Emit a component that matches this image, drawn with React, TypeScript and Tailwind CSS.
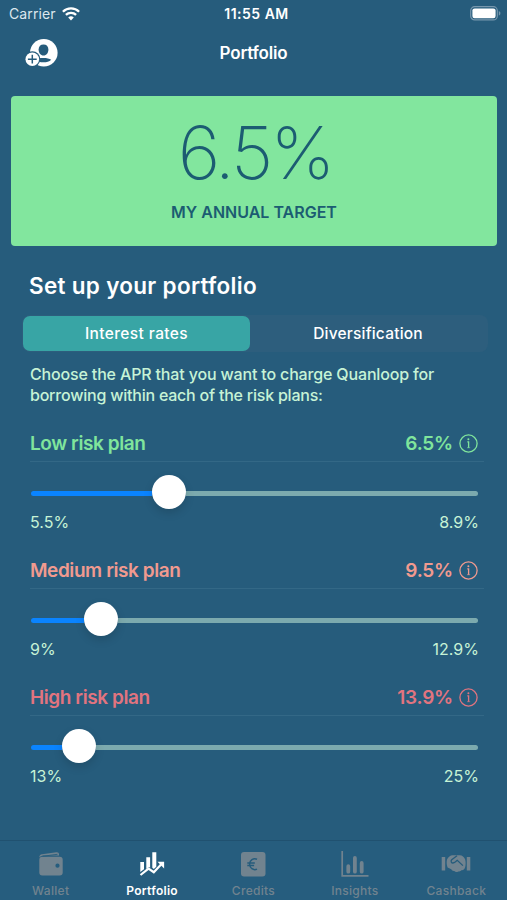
import { ReactNode } from "react";

const plans = [
  {
    name: "Low risk plan",
    rate: "6.5%",
    min: "5.5%",
    max: "8.9%",
    position: 137,
    color: "text-[#80e59c]",
  },
  {
    name: "Medium risk plan",
    rate: "9.5%",
    min: "9%",
    max: "12.9%",
    position: 69,
    color: "text-[#f19a8f]",
  },
  {
    name: "High risk plan",
    rate: "13.9%",
    min: "13%",
    max: "25%",
    position: 47,
    color: "text-[#e2747f]",
  },
];

function WifiIcon() {
  return (
    <svg width="18" height="14" viewBox="0 0 18 14" fill="none" stroke="white" strokeWidth="2.3">
      <path d="M0.9 4.7a11.5 11.5 0 0 1 16.2 0" />
      <path d="M3.9 7.9a7.2 7.2 0 0 1 10.2 0" />
      <path d="M9 13.4 6.2 10.5a4 4 0 0 1 5.6 0Z" fill="white" stroke="none" />
    </svg>
  );
}

function BatteryIcon() {
  return (
    <svg width="31" height="15" viewBox="0 0 31 15">
      <rect x="0.7" y="0.7" width="26.6" height="13.2" rx="4" fill="none" stroke="#7797ad" strokeWidth="1.2" />
      <rect x="2.4" y="2.4" width="23.200" height="9.8" rx="2.2" fill="white" />
      <path d="M28.8 5v4.6c1-.4 1.6-1.3 1.6-2.3S29.8 5.4 28.8 5Z" fill="#7797ad" />
    </svg>
  );
}

function AddUserIcon() {
  return (
    <svg width="34" height="30" viewBox="0 0 34 30">
      <circle cx="18.8" cy="14.8" r="13.8" fill="white" />
      <path d="M18.5 6.6c3 0 4.900 2 4.900 4.900 0 3.400-2 6-4.900 6s-4.900-2.600-4.900-6c0-2.900 1.900-4.900 4.900-4.900Z" fill="#265c7c" />
      <path d="M10.500 21.500c2-1.400 4.600-1.600 8-1.600s5.800.5 7.700 1.800c-1.800 1.800-4.600 2.600-7.700 2.600s-6.300-.6-8-2.800Z" fill="#265c7c" />
      <circle cx="7.3" cy="21.2" r="8" fill="#265c7c" />
      <circle cx="7.3" cy="21.2" r="6.8" fill="white" />
      <path d="M7.300 16.800v8.800M2.900 21.200h8.800" stroke="#265c7c" strokeWidth="1.5" />
    </svg>
  );
}

function InfoIcon() {
  return (
    <svg width="19" height="19" viewBox="0 0 19 19" fill="none" stroke="currentColor" strokeWidth="1.3">
      <circle cx="9.5" cy="9.5" r="8.6" />
      <path d="M8.300 7.800h1.300v6" strokeWidth="1.300" />
      <path d="M8 13.700h3.200" strokeWidth="0.600" />
      <circle cx="9.4" cy="5.3" r="1" fill="currentColor" stroke="none" />
    </svg>
  );
}

function WalletIcon() {
  return (
    <svg width="28" height="28" viewBox="0 0 28 28" fill="currentColor">
      <path d="M2.300 7.500C2.300 5.500 3.300 4.500 5 4.200L19.300 2.200c1.800-.2 2.700.7 2.700 2v1.400H7.500c-2 0-3.800.5-5.200 1.900Z" />
      <path
        fillRule="evenodd"
        d="M5.300 6.800h17.400a3 3 0 0 1 3 3v12.600a3 3 0 0 1-3 3H5.300a3 3 0 0 1-3-3V9.800a3 3 0 0 1 3-3ZM20.500 13.600a2.100 2.100 0 1 0 0 4.200 2.100 2.100 0 0 0 0-4.200Z"
      />
      <path d="M5.500 6.300 20.500 4.300" stroke="#265c7c" strokeWidth="0.9" />
    </svg>
  );
}

function PortfolioIcon() {
  return (
    <svg width="28" height="28" viewBox="0 0 28 28" fill="currentColor">
      <path d="M2.300 12h3.700v7.200l-3.700 2.900ZM8.300 7.300h3.800v10.800l-1-1-2.800 2ZM14.300 2.300h4v14.400l-2.500 2.300-1.500-1.200Z" />
      <path d="m2.500 25 8-6.400 5.300 3.600 8.400-9" fill="none" stroke="currentColor" strokeWidth="2.2" />
      <path d="M19.500 11.800h6.600v6.600Z" />
    </svg>
  );
}

function CreditsIcon() {
  return (
    <svg width="28" height="28" viewBox="0 0 28 28">
      <rect x="2" y="2" width="24.5" height="24.5" rx="3" fill="currentColor" />
      <path
        d="M18 9.300a5.100 5.100 0 0 0-7.300 4.900 5.100 5.100 0 0 0 7.300 4.900M8.300 13h7.500M8.300 15.500h6.800"
        fill="none"
        stroke="#265c7c"
        strokeWidth="1.5"
      />
    </svg>
  );
}

function InsightsIcon() {
  return (
    <svg width="28" height="28" viewBox="0 0 28 28" fill="none" stroke="currentColor">
      <path d="M1.200 1v24.800H27.500" strokeWidth="1.7" />
      <path d="M7.300 16.200v5.500M13.900 8v13.700M20.700 13v8.700" strokeWidth="3.8" strokeLinecap="round" />
    </svg>
  );
}

function CashbackIcon() {
  return (
    <svg width="30" height="28" viewBox="0 0 30 28" fill="currentColor">
      <path d="M.7 7h3.500v13.500H.7ZM25.800 7h3.500v13.500h-3.500Z" />
      <path d="M6 9.500c1.300-2.600 3.300-4.300 5.500-4.300h7.400c2.300 0 4.200 1.700 5.300 4.300.7 2.800.6 6-.2 8.300-.7 1.500-1.800 2.500-3.300 2.300-1 1.300-2.200 1.700-3.500 1.300-1.300 1-3 .7-3.900-.5-1.400.2-2.400-.4-3-1.600L6.600 17.500c-1-2.500-1.200-5.400-.6-8Z" />
      <path
        d="m16 5.700-5.300 4.100c-1.200 1.300-.4 3.200 1.300 3.200 1.300 0 2.500-1 4.300-2.700l5.600 5.300"
        fill="none"
        stroke="#265c7c"
        strokeWidth="1.3"
      />
    </svg>
  );
}

const tabs: { label: string; icon: ReactNode; active?: boolean }[] = [
  { label: "Wallet", icon: <WalletIcon /> },
  { label: "Portfolio", icon: <PortfolioIcon />, active: true },
  { label: "Credits", icon: <CreditsIcon /> },
  { label: "Insights", icon: <InsightsIcon /> },
  { label: "Cashback", icon: <CashbackIcon /> },
];

export default function App() {
  return (
    <div className="flex h-[900px] w-[507px] flex-col overflow-hidden bg-[#265c7c] font-['Inter',sans-serif] text-white">
      {/* Status bar */}
      <div className="grid h-7 grid-cols-3 items-center pr-[6px] pl-[9px] text-[14px]">
        <div className="-mt-px flex items-center gap-[6px] text-[#dce7ee]">
          <span className="tracking-[0.1px]">Carrier</span>
          <WifiIcon />
        </div>
        <span className="-mt-px -mr-[5px] -ml-[2px] text-center font-semibold tracking-[0.5px]">11:55 AM</span>
        <div className="-mt-[2px] flex justify-end">
          <BatteryIcon />
        </div>
      </div>

      {/* Header */}
      <header className="grid h-[68px] grid-cols-3 px-[25px] pt-[10px]">
        <AddUserIcon />
        <h1 className="pt-[3px] text-center text-[17px] leading-[24px] font-semibold tracking-[-0.2px]">
          Portfolio
        </h1>
      </header>

      {/* Annual target */}
      <section className="mr-[10px] ml-[11px] flex h-[150px] flex-col items-center rounded-[4px] bg-[#82e69e] text-[#1c5c72]">
        <div className="mt-[16px] ml-[2px] text-[73px] leading-[82px] font-extralight tracking-[-3px]">6.5%</div>
        <div className="mt-[8px] text-[16px] leading-5 font-semibold">MY ANNUAL TARGET</div>
      </section>

      <main className="flex-1 px-[29px] pt-[25px]">
        <h2 className="text-[22.500px] leading-[30px] font-semibold tracking-[0.3px]">Set up your portfolio</h2>

        <div className="mt-[14px] -mr-[10px] -ml-[7px] flex rounded-lg bg-[#2d5e7d] p-px text-[15.5px] font-medium">
          <button className="h-[35px] w-[227px] rounded-[7px] bg-[#38a5a5] pt-px tracking-[0.4px]">Interest rates</button>
          <button className="flex-1 pt-px pr-px tracking-[0.2px]">Diversification</button>
        </div>

        <p className="mt-[12px] ml-px text-[16px] leading-[21px] font-medium tracking-[-0.16px] whitespace-nowrap text-[#c6f3d6]">
          Choose the APR that you want to charge Quanloop for
          <br />
          <span className="tracking-[-0.22px]">borrowing within each of the risk plans:</span>
        </p>

        <div className="mt-[25px] ml-px flex flex-col">
          {plans.map((plan) => (
            <div key={plan.name} className="h-[127px]">
              <div
                className={`-mr-[6px] flex h-[31px] items-start justify-between border-b border-[#336886] pr-[6px] text-[19px] leading-[26px] font-semibold ${plan.color}`}
              >
                <span className="tracking-[-0.42px]">{plan.name}</span>
                <span className="flex items-center gap-[6px] tracking-[-0.2px]">
                  {plan.rate}
                  <span className="-mt-[2px]">
                    <InfoIcon />
                  </span>
                </span>
              </div>
              <div className="flex h-[62px] items-center pl-[1px]">
                <div className="h-[5px] rounded-l-full bg-[#0a84ff]" style={{ width: plan.position - 16 }} />
                <div className="z-10 -mt-[2px] h-[34px] w-[34px] shrink-0 rounded-full bg-white shadow-[0_4px_10px_rgba(0,0,0,0.14)]" />
                <div className="h-[5px] flex-1 rounded-r-full bg-[#7caaae]" />
              </div>
              <div className="-mt-[12px] -mr-px flex justify-between text-[16px] leading-5 text-[#c6f3d6]">
                <span>{plan.min}</span>
                <span>{plan.max}</span>
              </div>
            </div>
          ))}
        </div>
      </main>

      {/* Tab bar */}
      <nav className="grid h-[60px] shrink-0 grid-cols-5 border-t border-[#205170] bg-[#265d7e]">
        {tabs.map((tab) => (
          <div
            key={tab.label}
            className={`flex flex-col items-center pt-[9px] text-[12px] leading-4 tracking-[0.3px] ${
              tab.active ? "font-semibold text-white" : "font-medium text-[#71838f]"
            }`}
          >
            {tab.icon}
            <span className="mt-[5px]">{tab.label}</span>
          </div>
        ))}
      </nav>
    </div>
  );
}
